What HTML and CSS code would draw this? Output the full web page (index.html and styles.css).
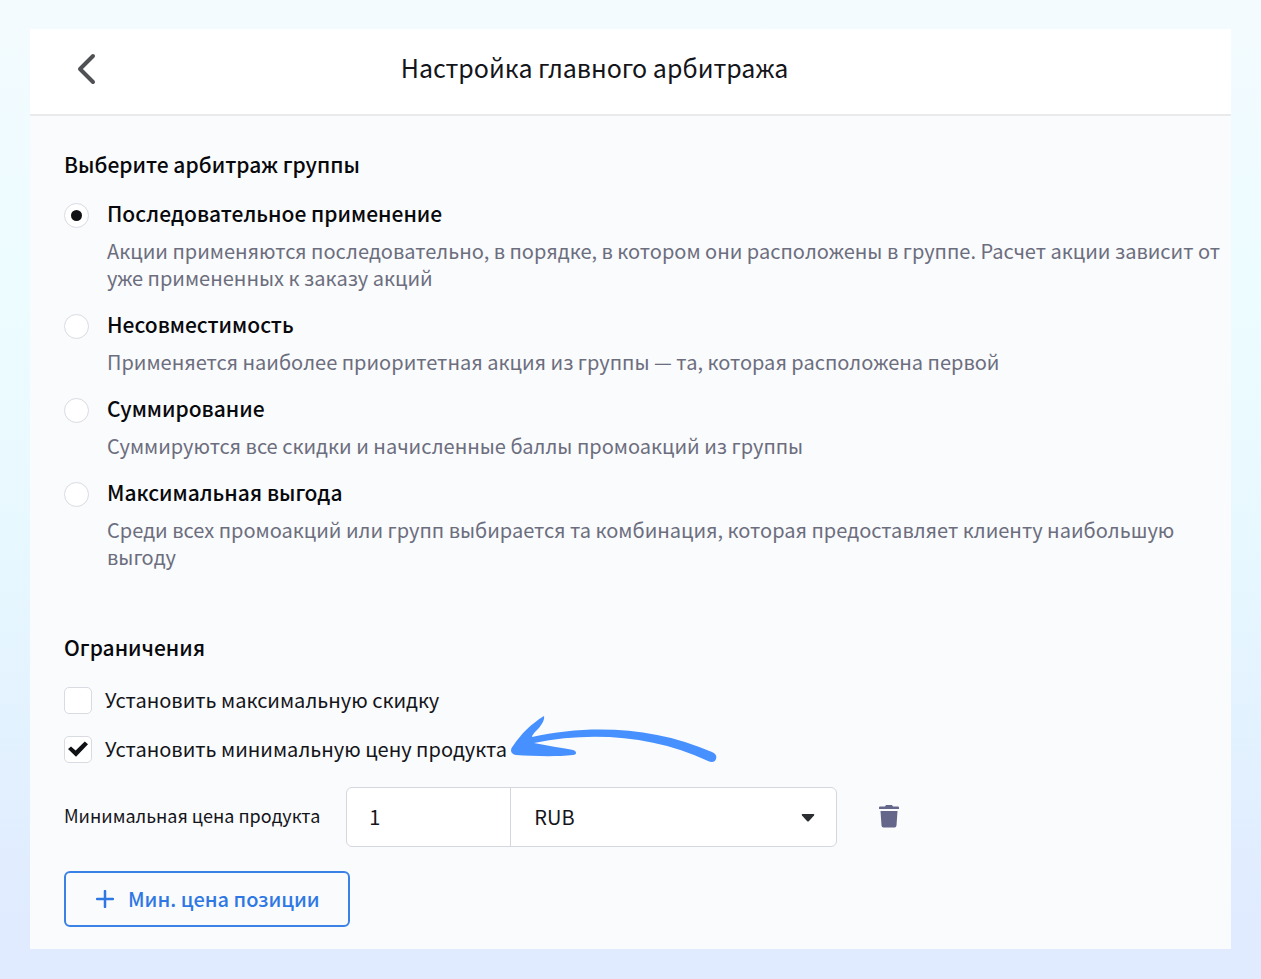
FILE: index.html
```html
<!DOCTYPE html>
<html lang="ru">
  <head>
    <meta charset="UTF-8" />
    <meta name="viewport" content="width=device-width, initial-scale=1.0" />
    <title>Настройка главного арбитража</title>
    <link rel="stylesheet" href="styles.css">
  </head>
  <body>
    <main class="card">
      <!-- Шапка -->
      <header class="header">
        <button class="back" type="button" aria-label="Назад">
          <svg width="20" height="32" viewBox="0 0 20 32" fill="none" stroke="#4f5155" stroke-width="4" stroke-linecap="round" stroke-linejoin="round">
            <path d="M17 3 4 16 17 29" />
          </svg>
        </button>
        <h1 class="title">Настройка главного арбитража</h1>
      </header>

      <form class="content">
        <!-- Арбитраж группы -->
        <h2 class="section-title">Выберите арбитраж группы</h2>
        <div class="options">
          <div class="option">
            <input class="radio" type="radio" name="arbitration" id="sequential" checked />
            <label class="option-title" for="sequential">Последовательное применение</label>
            <p class="option-text">
              Акции применяются последовательно, в порядке, в котором они
              расположены в группе. Расчет акции зависит от уже примененных к
              заказу акций
            </p>
          </div>
          <div class="option">
            <input class="radio" type="radio" name="arbitration" id="exclusive" />
            <label class="option-title" for="exclusive">Несовместимость</label>
            <p class="option-text">
              Применяется наиболее приоритетная акция из группы — та, которая
              расположена первой
            </p>
          </div>
          <div class="option">
            <input class="radio" type="radio" name="arbitration" id="sum" />
            <label class="option-title" for="sum">Суммирование</label>
            <p class="option-text">
              Суммируются все скидки и начисленные баллы промоакций из группы
            </p>
          </div>
          <div class="option">
            <input class="radio" type="radio" name="arbitration" id="max" />
            <label class="option-title" for="max">Максимальная выгода</label>
            <p class="option-text">
              Среди всех промоакций или групп выбирается та комбинация, которая
              предоставляет клиенту наибольшую выгоду
            </p>
          </div>
        </div>

        <!-- Ограничения -->
        <h2 class="section-title">Ограничения</h2>
        <div class="limits">
          <div class="limit">
            <input class="checkbox" type="checkbox" id="maxDiscount" />
            <label for="maxDiscount">Установить максимальную скидку</label>
          </div>
          <div class="limit">
            <input class="checkbox" type="checkbox" id="minPrice" checked />
            <label for="minPrice">Установить минимальную цену продукта</label>
            <svg class="arrow" width="208" height="48" viewBox="0 0 208 48" fill="#4690ff">
              <path d="M34 1C35 5 31 11 27 15C24 18 22 20 22 22C80 9 145 12 202 37C206 39 207 41 206 44C205 47 202 48 198 46C145 21 82 16 24 28C38 31 54 33 63 35C67 36 67 40 63 40C45 42 22 41 6 40C0 39 0 34 3 31C11 19 21 9 34 1Z" />
            </svg>
          </div>
        </div>

        <!-- Минимальная цена -->
        <div class="price">
          <label class="price-label" for="priceValue">Минимальная цена продукта</label>
          <div class="price-group">
            <input class="price-input" type="text" inputmode="numeric" id="priceValue" value="1" />
            <div class="select-wrap">
              <select class="select" aria-label="Валюта">
                <option>RUB</option>
              </select>
              <svg class="caret" width="14" height="8" viewBox="0 0 14 8" fill="#2c2d30">
                <path d="M1.500 0h11q1.500 0 .5 1.500L8 7q-1 1-2 0L1 1.500Q0 0 1.500 0Z" />
              </svg>
            </div>
          </div>
          <button class="remove" type="button" aria-label="Удалить">
            <svg width="20" height="24" viewBox="0 0 20 24" fill="#65678a">
              <path d="M1 1.500h5l1-1.500h6l1 1.500h5q1 0 1 1V4H0V2.500q0-1 1-1ZM1.500 6h17l-1 14.500q-.2 2-2 2h-11q-1.800 0-2-2Z" />
            </svg>
          </button>
        </div>

        <button class="add" type="button">
          <svg width="18" height="18" viewBox="0 0 18 18" stroke="#2f78e4" stroke-width="2.500" stroke-linecap="round">
            <path d="M9 1v16M1 9h16" />
          </svg>
          Мин. цена позиции
        </button>
      </form>
    </main>
  </body>
</html>
```
FILE: styles.css
```css
* {
  box-sizing: border-box;
}
body {
  margin: 0;
  padding: 29px 30px 30px;
  min-height: 100vh;
  background: linear-gradient(180deg, #f4fbff 0%, #ecfcff 30%, #e8f8ff 55%, #e3f2ff 74%, #e0ebff 94%);
  font-family: "Noto Sans CJK SC", "Noto Sans", sans-serif;
  font-size: 20px;
  line-height: 28px;
  color: #14151a;
}
button,
input,
select {
  font: inherit;
  color: inherit;
  margin: 0;
}
h1,
h2,
p {
  margin: 0;
}
.card {
  background-color: #fafbfd;
}
.header {
  display: grid;
  grid-template-columns: 72px 1fr 180px;
  align-items: center;
  height: 87px;
  padding: 0 0 6px 36px;
  background-color: #fff;
  border-bottom: 2px solid #e9eaec;
}
.back,
.remove {
  display: flex;
  padding: 0;
  background: none;
  border: none;
  cursor: pointer;
}
.back {
  margin-left: 10px;
}
.title {
  padding-bottom: 4px;
  font-size: 25px;
  font-weight: 400;
  line-height: 36px;
  text-align: center;
}
.content {
  padding: 33px 8px 22px 34px;
}
.section-title {
  font-size: 21px;
  font-weight: 500;
  line-height: 30px;
  color: #08090c;
}
.options {
  display: grid;
  gap: 21px;
  margin: 22px 0 62px;
}
.option {
  display: grid;
  grid-template-columns: 25px 1fr;
  column-gap: 18px;
  row-gap: 9px;
  align-items: start;
}
.option-title {
  font-size: 21px;
  font-weight: 500;
  line-height: 24px;
  color: #08090c;
}
.option-text {
  grid-column: 2;
  line-height: 27px;
  color: #6c6e7e;
}
.radio,
.checkbox {
  appearance: none;
  background-color: #fff;
  border: 1px solid #d9dbe2;
  display: grid;
  place-items: center;
}
.radio {
  width: 25px;
  height: 25px;
  margin-top: 2px;
  border-radius: 50%;
}
.radio:checked::before {
  content: "";
  width: 11px;
  height: 11px;
  border-radius: 50%;
  background-color: #101114;
}
.checkbox {
  width: 28px;
  height: 27px;
  border-radius: 5px;
}
.checkbox:checked::before {
  content: "";
  width: 20px;
  height: 16px;
  background-color: #101114;
  clip-path: polygon(0 50%, 15% 34%, 38% 60%, 84% 3%, 100% 20%, 40% 98%);
}
.limits {
  display: grid;
  gap: 21px;
  margin: 24px 0;
}
.limit {
  position: relative;
  display: flex;
  align-items: center;
  gap: 13px;
}
.arrow {
  position: absolute;
  left: 446px;
  top: -20px;
}
.price {
  display: flex;
  align-items: center;
}
.price-label {
  padding-bottom: 4px;
  font-size: 18px;
}
.price-group {
  display: flex;
  width: 491px;
  height: 60px;
  margin: 0 42px 0 26px;
  background-color: #fff;
  border: 1px solid #d5d7de;
  border-radius: 6px;
}
.price-input {
  width: 164px;
  padding: 0 22px;
  background: none;
  border: none;
  border-right: 1px solid #d5d7de;
}
.select-wrap {
  position: relative;
  flex: 1;
}
.select {
  appearance: none;
  width: 100%;
  height: 100%;
  padding: 0 23px;
  background: none;
  border: none;
}
.caret {
  position: absolute;
  right: 21px;
  top: 26px;
  pointer-events: none;
}
.add {
  display: flex;
  align-items: center;
  gap: 14px;
  height: 56px;
  margin-top: 24px;
  padding: 0 28px 0 30px;
  background: none;
  border: 2px solid #3b82e6;
  border-radius: 6px;
  color: #2f78e4;
  font-weight: 500;
  cursor: pointer;
}
```
